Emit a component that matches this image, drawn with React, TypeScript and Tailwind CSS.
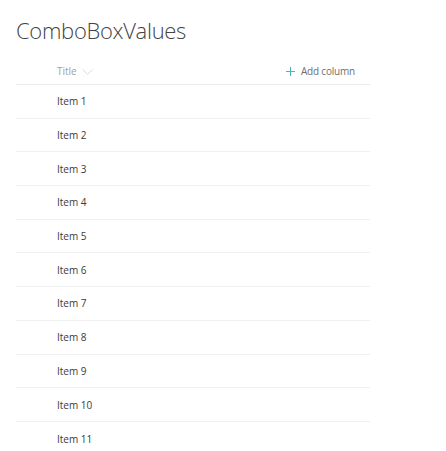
import React from "react";

const items = Array.from({ length: 11 }, (_, i) => `Item ${i + 1}`);

export default function App() {
  return (
    <div className="min-h-screen bg-white font-['Open_Sans',sans-serif]">
      <div className="pl-4 w-[370px]">
        <h1 className="pt-[15px] h-[51px] text-[22px] leading-[30px] font-light text-[#444] tracking-[-0.3px]">
          ComboBoxValues
        </h1>
        <div className="flex items-center pt-[8px] h-[34px] border-b border-[#ececec] text-[10px] text-[#a0a0a0]">
          <div className="pl-[41px] flex items-center gap-[5px]">
            <span>Title</span>
            <svg width="11" height="6" viewBox="0 0 11 6" fill="none">
              <path d="M0.5 0.5 L5.5 5.2 L10.5 0.5" stroke="#d8d8d8" strokeWidth="0.9" />
            </svg>
          </div>
          <div className="ml-auto pr-[15px] flex items-center gap-[6px] text-[#6f6f6f]">
            <svg width="9" height="9" viewBox="0 0 9 9" fill="none">
              <path d="M4.5 0 V9 M0 4.5 H9" stroke="#45b8bd" strokeWidth="1" />
            </svg>
            <span className="tracking-[-0.2px]">Add column</span>
          </div>
        </div>
        {items.map((it, i) => (
          <div
            key={it}
            className={`flex items-center pt-[1px] h-[33.7px] text-[10px] text-[#3a3a3a] ${i < items.length - 1 ? "border-b border-[#f0f0f0]" : ""}`}
          >
            <span className="pl-[41px]">{it}</span>
          </div>
        ))}
      </div>
    </div>
  );
}
